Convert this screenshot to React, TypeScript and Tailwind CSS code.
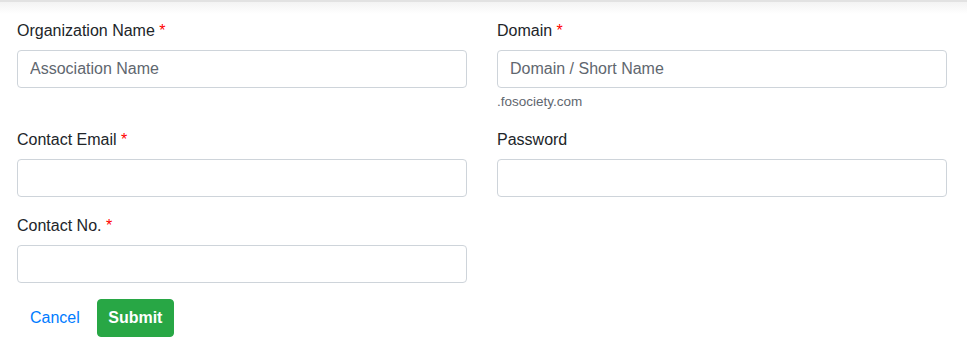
import React from "react";

const font = { fontFamily: '"Liberation Sans", Arial, sans-serif' };

function Label({ text, required }: { text: string; required?: boolean }) {
  return (
    <label className="block pt-px mb-[7px] text-[16px] leading-6 text-[#212529]">
      {text}
      {required && <span className="text-[#ff0000]"> *</span>}
    </label>
  );
}

function Input({ placeholder }: { placeholder?: string }) {
  return (
    <input
      className="block w-full h-[38px] px-3 py-1.5 text-[16px] leading-6 text-[#495057] bg-white border border-[#ced4da] rounded-[4px] placeholder:text-[#5f676f] outline-none"
      placeholder={placeholder}
      style={font}
    />
  );
}

export default function App() {
  return (
    <div className="relative w-[967px] h-[357px] bg-white overflow-hidden" style={font}>
      <div className="absolute top-0 left-0 right-0 h-[14px] border-t-2 border-[#e2e2e2] bg-gradient-to-b from-[#f3f3f3] to-white" />
      <div className="relative pt-[18px] pl-[17px] pr-[20px]">
        <div className="grid grid-cols-2 gap-x-[30px]">
          <div className="mb-4">
            <Label text="Organization Name" required />
            <Input placeholder="Association Name" />
          </div>
          <div className="mb-4">
            <Label text="Domain" required />
            <Input placeholder="Domain / Short Name" />
            <small className="block mt-1 text-[13.5px] leading-[19.2px] text-[#5f676f]">.fosociety.com</small>
          </div>
          <div className="mb-4">
            <Label text="Contact Email" required />
            <Input />
          </div>
          <div className="mb-4">
            <Label text="Password" />
            <Input />
          </div>
          <div className="mb-4">
            <Label text="Contact No." required />
            <Input />
          </div>
          <div />
        </div>
        <div className="flex items-center gap-[5px] pl-px">
          <button className="h-[38px] px-3 text-[16px] leading-6 text-[#007bff] bg-transparent rounded-[4px]">
            Cancel
          </button>
          <button className="h-[38px] w-[77px] text-center text-[16px] leading-6 font-bold text-white bg-[#28a745] border border-[#28a745] rounded-[4px]">
            Submit
          </button>
        </div>
      </div>
    </div>
  );
}
